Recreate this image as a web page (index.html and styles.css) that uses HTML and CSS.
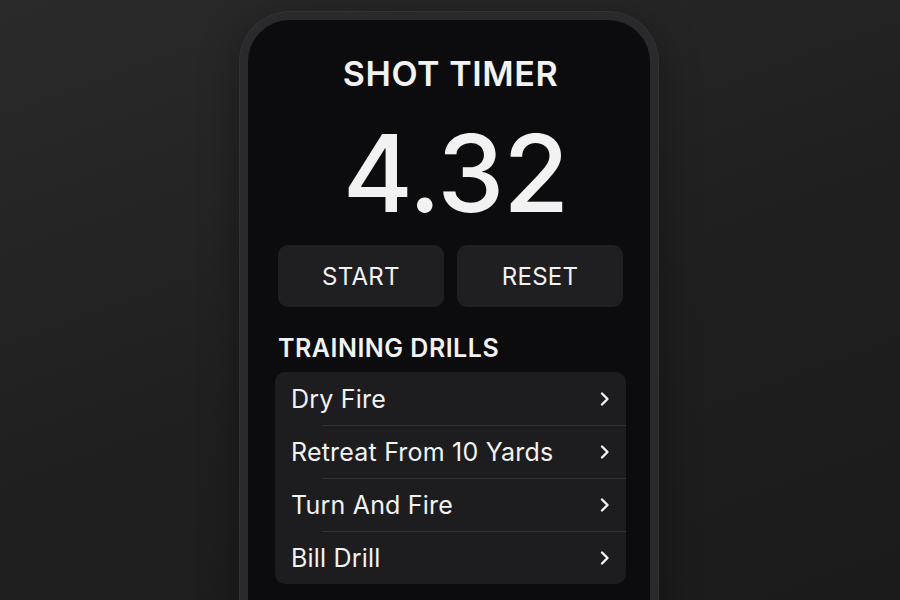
FILE: index.html
```html
<!DOCTYPE html>
<html lang="en">
    <head>
        <meta charset="UTF-8" />
        <meta name="viewport" content="width=device-width, initial-scale=1.0" />
        <title>Shot Timer</title>
        <link rel="stylesheet" href="styles.css">
    </head>
    <body>
        <div class="phone">
            <div class="screen">
                <h1 class="title">SHOT TIMER</h1>
                <div class="time" id="time">4.32</div>
                <div class="controls">
                    <button class="btn">START</button>
                    <button class="btn">RESET</button>
                </div>
                <h2 class="section">TRAINING DRILLS</h2>
                <ul class="drills">
                    <li class="drill"><span>Dry Fire</span><svg class="chev" viewBox="0 0 12 16"><path d="M3 2.5 L8.5 8 L3 13.5" /></svg></li>
                    <li class="drill"><span>Retreat From 10 Yards</span><svg class="chev" viewBox="0 0 12 16"><path d="M3 2.5 L8.5 8 L3 13.5" /></svg></li>
                    <li class="drill"><span>Turn And Fire</span><svg class="chev" viewBox="0 0 12 16"><path d="M3 2.5 L8.5 8 L3 13.5" /></svg></li>
                    <li class="drill"><span>Bill Drill</span><svg class="chev" viewBox="0 0 12 16"><path d="M3 2.5 L8.5 8 L3 13.5" /></svg></li>
                </ul>
            </div>
        </div>
    </body>
</html>
```

FILE: styles.css
```css
html,
body {
    height: 100%;
}
body {
    margin: 0;
    overflow: hidden;
    font-family: Inter, "Noto Sans", sans-serif;
    color: #f2f2f2;
    background: linear-gradient(160deg, #2a2a2b 0%, #1f1f20 55%, #1b1b1c 100%);
    display: flex;
    justify-content: center;
}
.phone {
    margin-top: 12px;
    margin-left: -2px;
    width: 402px;
    height: 700px;
    flex-shrink: 0;
    border: 8px solid #2a2a2c;
    border-radius: 50px;
    background: #0c0c0e;
    box-shadow: 0 0 0 1px #333335, 0 10px 40px rgba(0, 0, 0, 0.35);
}
.screen {
    padding: 0 24px 0 27px;
    display: flex;
    flex-direction: column;
}
.title {
    margin: 34px 0 0;
    font-size: 34px;
    line-height: 40px;
    font-weight: 600;
    letter-spacing: 0.6px;
    text-align: center;
}
.time {
    margin-top: 22px;
    padding-left: 10px;
    font-size: 107px;
    line-height: 114px;
    font-weight: 500;
    text-align: center;
    letter-spacing: -1px;
}
.controls {
    margin: 15px 3px 0;
    display: flex;
    gap: 13px;
}
.btn {
    flex: 1;
    height: 62px;
    border: none;
    border-radius: 10px;
    background: #1f1f21;
    color: #f2f2f2;
    font-family: inherit;
    font-size: 24px;
    font-weight: 400;
    letter-spacing: 0.3px;
}
.section {
    margin: 26px 3px 0;
    font-size: 25px;
    line-height: 30px;
    font-weight: 600;
    letter-spacing: 0.5px;
}
.drills {
    list-style: none;
    margin: 9px 0 0;
    padding: 0;
    background: #1d1d1f;
    border-radius: 10px;
}
.drill {
    height: 53px;
    padding: 0 16px;
    display: flex;
    align-items: center;
    justify-content: space-between;
    font-size: 25px;
    letter-spacing: 0.2px;
    position: relative;
}
.drill + .drill::before {
    content: "";
    position: absolute;
    top: 0;
    left: 47px;
    right: 0;
    border-top: 1px solid #333336;
}
.chev {
    width: 12px;
    height: 16px;
    margin-right: -1px;
}
.chev path {
    fill: none;
    stroke: #f2f2f2;
    stroke-width: 2.4;
    stroke-linecap: round;
    stroke-linejoin: round;
}
```
